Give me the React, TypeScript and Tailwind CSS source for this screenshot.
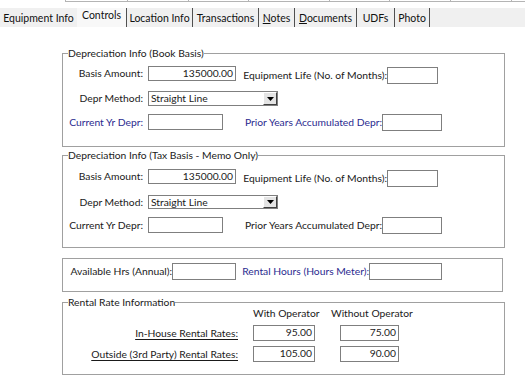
import React from "react";

const inputCls = "border border-[#7f7f7f] bg-white text-right pr-[2px] leading-[13px] text-[#1a1a1a]";

function Field({ cls, value }: { cls: string; value?: string }) {
  return <div className={inputCls + " " + cls}>{value ?? ""}</div>;
}

function Dropdown({ cls }: { cls: string }) {
  return (
    <div className={"ml-[5px] w-[130px] border border-[#7f7f7f] bg-white flex items-stretch " + cls}>
      <div className="flex-1 pl-[2px] leading-[12px] text-[#1a1a1a]">Straight Line</div>
      <div className="w-[14px] bg-[#e4e4e4] border-t border-l border-t-[#ffffff] border-l-[#ffffff] border-r border-b border-r-[#404040] border-b-[#404040] flex items-center justify-center">
        <svg width="7" height="4" viewBox="0 0 7 4">
          <path d="M0 0H7L3.5 4Z" fill="#000" />
        </svg>
      </div>
    </div>
  );
}

function Tab({ cls, children }: { cls: string; children: React.ReactNode }) {
  return <div className={"flex justify-center " + cls}>{children}</div>;
}

function DeprGroup({
  title,
  blue,
  spacing,
}: {
  title: string;
  blue: boolean;
  spacing: { top: string; r1: string; r2gap: string; r2: string; r3gap: string; pb: string; fs: string };
}) {
  const lc = blue ? "text-[#2b2b8f]" : "text-[#1a1a1a]";
  return (
    <fieldset className={"ml-[62px] w-[443px] border border-[#a0a0a0] min-w-0 " + spacing.fs + " " + spacing.pb}>
      <legend className="ml-[5px] p-0 leading-[12px] text-[#1a1a1a]">{title}</legend>
      <div className={"flex items-start h-[15px] " + spacing.top}>
        <div className="w-[80px] text-right leading-[15px] whitespace-nowrap">Basis Amount:</div>
        <Field cls="ml-[5px] w-[88px] h-[15px]" value="135000.00" />
        <div className="w-[151px] text-right leading-[17px] mt-[1px] whitespace-nowrap">Equipment Life (No. of Months):</div>
        <Field cls="w-[51px] h-[17px] mt-[1px]" />
      </div>
      <div className={"flex items-start " + spacing.r2gap + " " + spacing.r2}>
        <div className={"w-[80px] text-right whitespace-nowrap " + spacing.r1}>Depr Method:</div>
        <Dropdown cls={spacing.r2} />
      </div>
      <div className={"flex items-start h-[16px] " + spacing.r3gap}>
        <div className={"w-[80px] text-right leading-[16px] whitespace-nowrap " + lc}>Current Yr Depr:</div>
        <Field cls="ml-[5px] w-[75px] h-[16px]" />
        <div className={"w-[159px] text-right leading-[16px] whitespace-nowrap " + lc}>Prior Years Accumulated Depr:</div>
        <Field cls="w-[60px] h-[17px]" />
      </div>
    </fieldset>
  );
}

export default function App() {
  const cells = ["w-[62px]", "w-[61px]", "w-[60px]", "w-[81px]", "w-[60px]", "w-[61px]", "w-[61px]"];
  return (
    <div className="w-[525px] h-[383px] overflow-hidden bg-white font-['Lato',sans-serif] text-[10.3px] leading-[12px] text-[#1a1a1a]">
      {/* remnant of grid above */}
      <div className="ml-[65px] flex h-[2px] border-l border-b border-[#b4b4b4]">
        {cells.map((c, i) => (
          <div key={i} className={c + " border-r border-[#b4b4b4]"} />
        ))}
      </div>

      {/* tab strip */}
      <div className="mt-[6px] h-[19px] bg-[#f0f0f0] flex items-stretch text-[10.5px] text-[#111]">
        <Tab cls="w-[77px] items-center pt-[1px]">Equipment Info</Tab>
        <Tab cls="w-[50px] bg-[#f8f8f8] items-start pt-[1px] border-r border-[#505050]">Controls</Tab>
        <Tab cls="w-[66px] items-center pt-[1px] border-r border-[#505050]">Location Info</Tab>
        <Tab cls="w-[66px] items-center pt-[1px] border-r border-[#505050]">Transactions</Tab>
        <Tab cls="w-[36px] items-center pt-[1px] border-r border-[#505050]">
          <span>
            <span className="underline">N</span>otes
          </span>
        </Tab>
        <Tab cls="w-[62px] items-center pt-[1px] border-r border-[#505050]">
          <span>
            <span className="underline">D</span>ocuments
          </span>
        </Tab>
        <Tab cls="w-[38px] items-center pt-[1px] border-r border-[#505050]">UDFs</Tab>
        <Tab cls="w-[35px] items-center pt-[1px] border-r border-[#505050]">Photo</Tab>
      </div>

      <DeprGroup
        title="Depreciation Info (Book Basis)"
        blue={true}
        spacing={{ fs: "mt-[20px]", top: "mt-[7px]", r1: "leading-[15px]", r2gap: "mt-[10px]", r2: "h-[15px]", r3gap: "mt-[8px]", pb: "pb-[16px]" }}
      />
      <DeprGroup
        title="Depreciation Info (Tax Basis - Memo Only)"
        blue={false}
        spacing={{ fs: "mt-[2px]", top: "mt-[8px]", r1: "leading-[14px]", r2gap: "mt-[11px]", r2: "h-[14px]", r3gap: "mt-[8px]", pb: "pb-[14px]" }}
      />

      {/* hours box */}
      <div className="mt-[10px] ml-[62px] w-[441px] border border-[#a0a0a0] pt-[4px] pb-[11px]">
        <div className="flex items-start h-[17px]">
          <div className="w-[109px] text-right leading-[17px] whitespace-nowrap">Available Hrs (Annual):</div>
          <Field cls="w-[64px] h-[17px]" />
          <div className="w-[133px] text-right leading-[17px] whitespace-nowrap text-[#2b2b8f]">Rental Hours (Hours Meter):</div>
          <Field cls="w-[73px] h-[17px]" />
        </div>
      </div>

      {/* rental rates */}
      <fieldset className="mt-[4px] ml-[62px] w-[443px] border border-[#a0a0a0] min-w-0 pb-[12px]">
        <legend className="ml-[5px] p-0 leading-[12px]">Rental Rate Information</legend>
        <div className="-mt-[1px] flex h-[12px] pl-[190px] leading-[12px]">
          <div className="w-[78px] whitespace-nowrap">With Operator</div>
          <div className="whitespace-nowrap">Without Operator</div>
        </div>
        <div className="mt-[6px] flex items-start h-[16px]">
          <div className="w-[175px] text-right leading-[16px] whitespace-nowrap underline underline-offset-[2px]">In-House Rental Rates:</div>
          <Field cls="ml-[15px] w-[62px] h-[16px]" value="95.00" />
          <Field cls="ml-[25px] w-[59px] h-[16px]" value="75.00" />
        </div>
        <div className="mt-[5px] flex items-start h-[16px]">
          <div className="w-[175px] text-right leading-[16px] whitespace-nowrap underline underline-offset-[2px]">Outside (3rd Party) Rental Rates:</div>
          <Field cls="ml-[15px] w-[62px] h-[16px]" value="105.00" />
          <Field cls="ml-[25px] w-[59px] h-[16px]" value="90.00" />
        </div>
      </fieldset>
    </div>
  );
}
